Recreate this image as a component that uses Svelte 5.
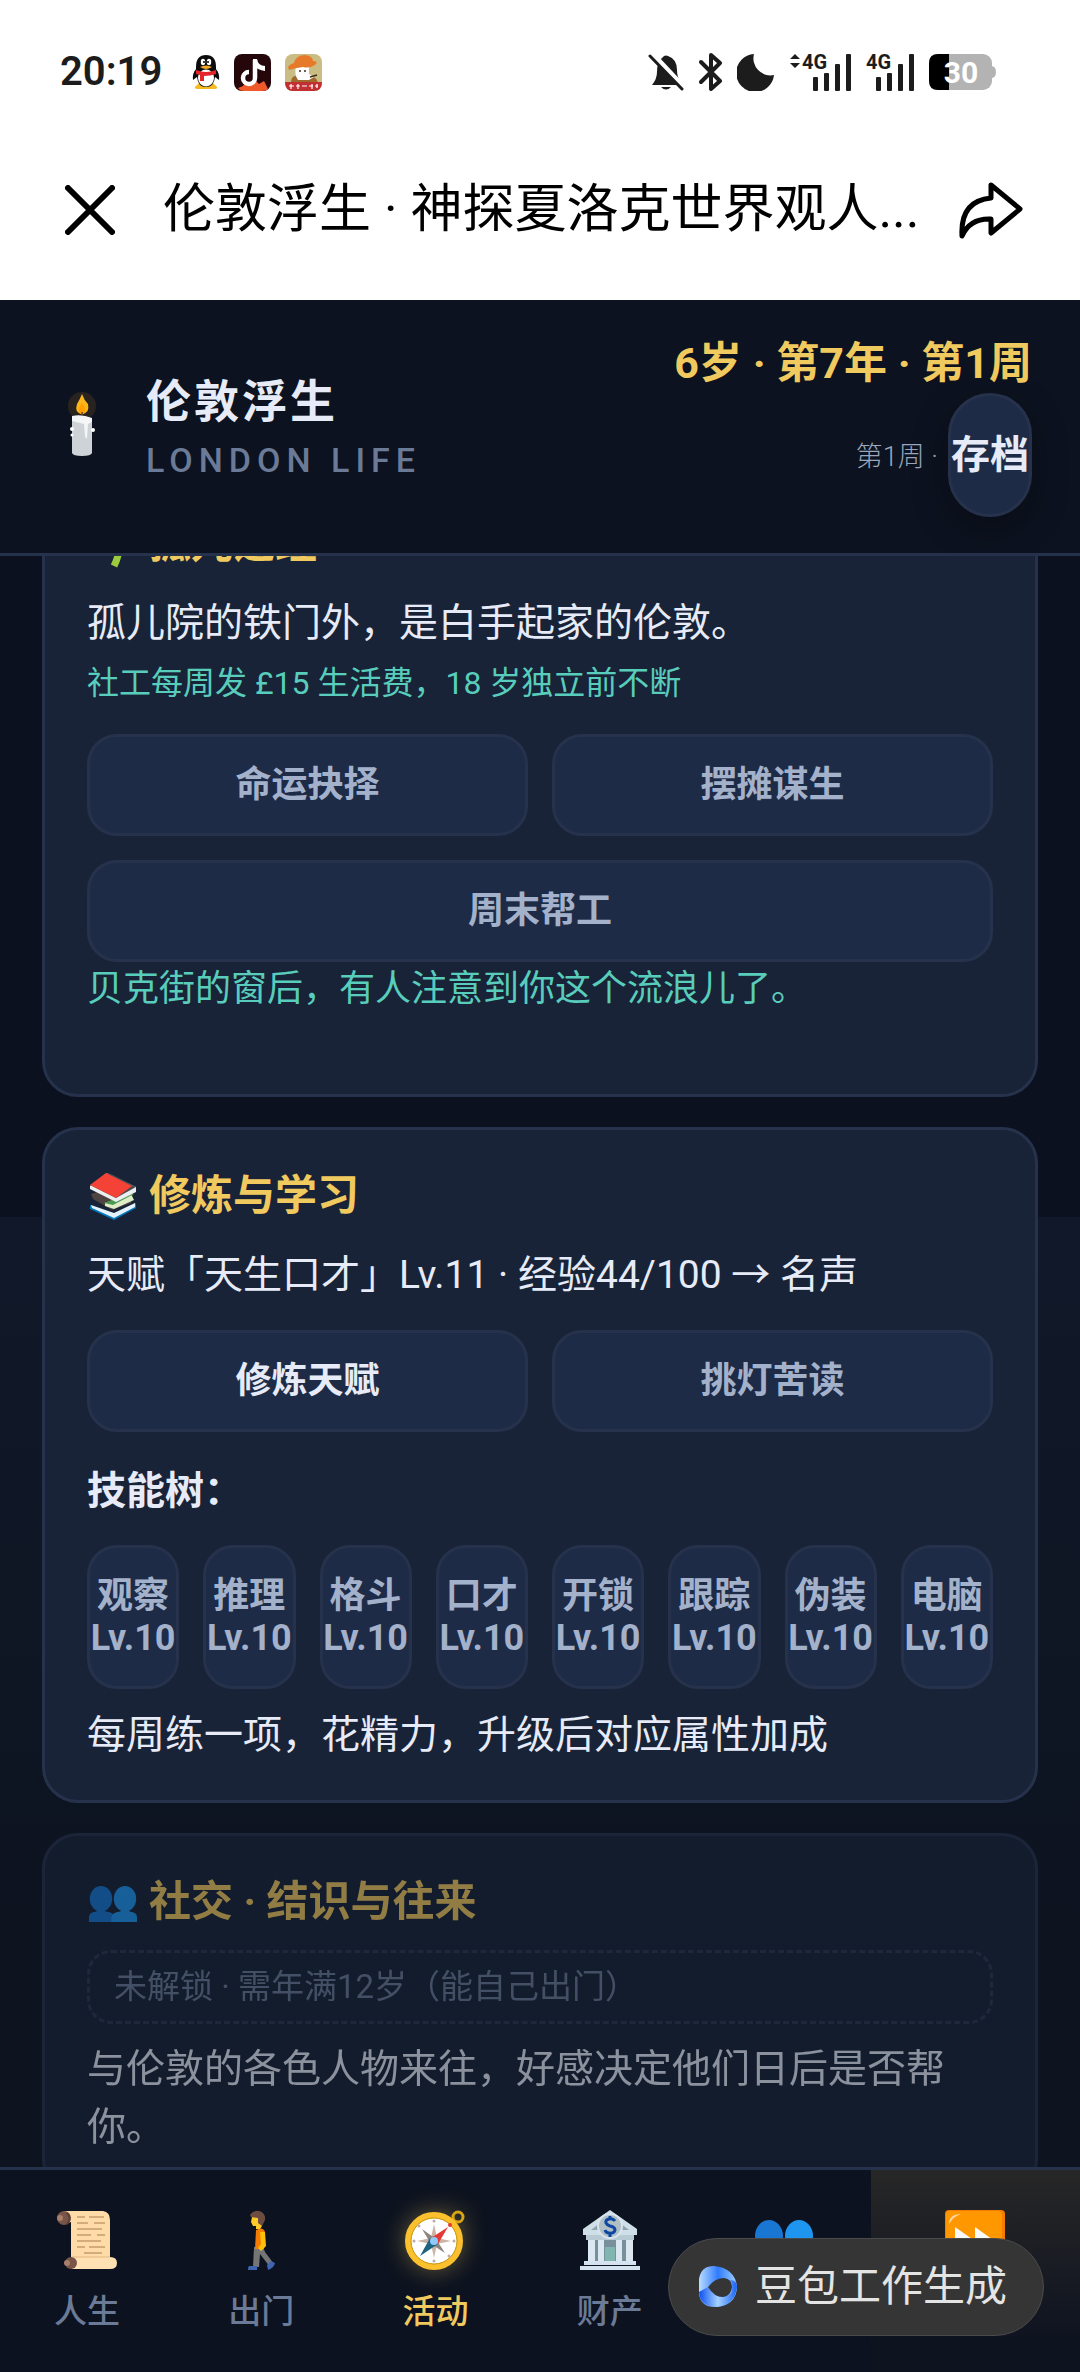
<script>
  import { onMount } from 'svelte';

  const SCROLL_START = 111;

  const skills = ['观察', '推理', '格斗', '口才', '开锁', '跟踪', '伪装', '电脑'];

  const tabs = [
    { id: 'life', label: '人生' },
    { id: 'out', label: '出门' },
    { id: 'act', label: '活动' },
    { id: 'money', label: '财产' },
    { id: 'people', name: '人脉' },
    { id: 'next', name: '下周' }
  ];

  let active = $state('act');
  let list;

  onMount(() => {
    list.scrollTop = SCROLL_START;
  });
</script>

{#snippet people()}
  <svg class="emoji" viewBox="0 0 60 60" aria-hidden="true">
    <ellipse cx="15" cy="26" rx="14" ry="16" fill="#1976d2" />
    <ellipse cx="45" cy="26" rx="14" ry="16" fill="#1e96f0" />
    <path d="M0 55v-6q0-6 9-7l2-3h8l2 3q11 1 11 8v5z" fill="#1976d2" />
    <path d="M28 55v-5q0-7 11-8l2-3h8l2 3q9 1 9 7v6z" fill="#1e96f0" />
  </svg>
{/snippet}

{#snippet tabIcon(id)}
  {#if id === 'life'}
    <svg class="emoji" viewBox="0 0 60 60" aria-hidden="true">
      <path d="M7 1h39q7 1 7 9v37H14V12L7 14z" fill="#ffdca7" />
      <circle cx="7" cy="8" r="7" fill="#795548" />
      <circle cx="3" cy="8" r="3" fill="#a97f6c" />
      <path d="M10 3q5 5 0 11" fill="none" stroke="#5d4037" stroke-width="2" />
      <path d="M15 47h38q7 0 7 6t-7 6H15z" fill="#ffe0b2" />
      <path d="M15 47h38" stroke="#e0b77e" stroke-width="1" />
      <circle cx="14" cy="53" r="6" fill="#795548" />
      <circle cx="10" cy="53" r="3" fill="#a97f6c" />
      <g fill="none" stroke="#c69c6d" stroke-width="1.4">
        <path d="M20 7h8m4 0h15M20 13h11m6 0h11M20 19h25M20 25h14m6 0h8M20 31h24M20 37h8m4 0h16M27 43h18" />
      </g>
    </svg>
  {:else if id === 'out'}
    <svg class="emoji" viewBox="0 0 60 60" aria-hidden="true">
      <path d="M23 37h9l2 5 9 12-4 3-10-13-1 13h-6z" fill="#757575" />
      <path d="M25 20q7-4 9 2l-1 17h-9z" fill="#f57c00" />
      <path d="M29 22h5l1 14-5 5-3-3 3-4z" fill="#ffc107" />
      <path d="M21 7h10v9l-2 3h-4v-3h-3l-2-4z" fill="#ffca28" />
      <path d="M19 5q3-5 9-4 7 2 6 9l-3 6-4-3V8l-7-1z" fill="#6d4c41" />
      <path d="M18 56h8v4h-9q0-3 1-4zM36 55l4-4 4 2q-1 5-7 7z" fill="#3f65b0" />
    </svg>
  {:else if id === 'act'}
    <svg class="emoji glow" viewBox="0 0 60 60" aria-hidden="true">
      <circle cx="53" cy="7" r="5" fill="none" stroke="#d9a514" stroke-width="3" />
      <circle cx="29" cy="31" r="26" fill="#fff" stroke="#fbc02d" stroke-width="6" />
      <circle cx="29" cy="31" r="23" fill="none" stroke="#c79100" stroke-width="1" />
      <path d="M29 14l3 14 14 3-14 3-3 14-3-14-14-3 14-3z" fill="#cbb3a6" />
      <path d="M17 19l14 10 9 14-14-9z" fill="#8d8580" />
      <path d="M43 17L33 34l-7-6z" fill="#e53935" />
      <path d="M15 46l10-18 8 6z" fill="#1c6480" />
      <circle cx="29" cy="31" r="4" fill="#90caf9" />
      <g fill="#bcaaa4">
        <circle cx="29" cy="11" r="1.5" /><circle cx="29" cy="51" r="1.5" />
        <circle cx="9" cy="31" r="1.5" /><circle cx="49" cy="31" r="1.5" />
        <circle cx="14" cy="16" r="1.5" /><circle cx="44" cy="46" r="1.5" />
      </g>
      <circle cx="45" cy="15" r="2" fill="#e53935" />
    </svg>
  {:else if id === 'money'}
    <svg class="emoji" viewBox="0 0 60 60" aria-hidden="true">
      <path d="M9 28h43v25H9z" fill="#78909c" />
      <path d="M25 37h10v16H25z" fill="#80b5b0" />
      <path d="M30 0L57 19v6H3v-6z" fill="#cfdfe8" />
      <path d="M30 5L49 20H11z" fill="#90a4ae" />
      <path d="M6 25h48v5H6z" fill="#b8cbd5" />
      <path d="M8 30h7v22H8zM18 30h6v22h-6zM36 30h6v22h-6zM46 30h7v22h-7z" fill="#dbe8f2" />
      <path d="M4 51h52v4H4zM0 56h60v4H0z" fill="#d5e3f0" />
      <circle cx="30" cy="16" r="12" fill="#b0bec5" stroke="#d8e5ee" stroke-width="2" />
      <path d="M35 11q-2-3-6-2-4 1-3 4 1 2 4 3 5 1 5 4-1 4-6 3-3 0-4-3M30 6v3m0 14v4" fill="none" stroke="#0d47a1" stroke-width="3" />
    </svg>
  {:else if id === 'people'}
    {@render people()}
  {:else}
    <svg class="emoji" viewBox="0 0 60 60" aria-hidden="true">
      <rect width="60" height="60" rx="4" fill="#f57c00" />
      <rect x="1" y="1" width="56" height="56" rx="4" fill="#ff9800" />
      <path d="M4 14q0-10 12-10-7 2-12 10z" fill="#ffd699" />
      <path d="M10 17l20 14V17l21 15-21 14V33L10 46z" fill="#fafafa" />
    </svg>
  {/if}
{/snippet}

{#snippet bars()}
  <g fill="#1c1c1c">
    <rect x="0" y="23" width="5" height="14" rx="1" />
    <rect x="11" y="19" width="5" height="18" rx="1" />
    <rect x="22" y="10" width="5" height="27" rx="1" />
    <rect x="33" y="0" width="5" height="37" rx="1" />
  </g>
{/snippet}

<div class="screen">
  <div class="status">
    <div class="status-side">
      <span class="clock">20:19</span>
      <svg width="28" height="36" viewBox="0 0 28 36" aria-hidden="true">
        <path d="M3 33q-1 2 4 2h14q5 0 4-2l-4-4H7z" fill="#f5b921" />
        <path d="M5 14Q0 19 1 26l4-3q1 10 9 10t9-10l4 3q1-7-4-12z" fill="#0c0c0c" />
        <path d="M14 1q10 0 10 12v3H4v-3Q4 1 14 1z" fill="#0c0c0c" />
        <ellipse cx="14" cy="24" rx="8" ry="8.500" fill="#fff" />
        <ellipse cx="11" cy="8" rx="2.200" ry="3.200" fill="#fff" />
        <ellipse cx="17" cy="8" rx="2.200" ry="3.200" fill="#fff" />
        <circle cx="12" cy="8" r="1" /><circle cx="16" cy="8" r="1" />
        <path d="M8 13q6-3 12 0-6 4-12 0z" fill="#f5a623" />
        <path d="M4 16q10 4 20 0v4q-6 2-12 2v5H8v-6l-4-1z" fill="#e3242b" />
      </svg>
      <svg width="37" height="37" viewBox="0 0 37 37" aria-hidden="true">
        <rect width="37" height="37" rx="8" fill="#25070b" />
        <path d="M4 34l5-2 3-5 4 3 5-4 4 4 5-3 4 8q-2 2-6 2H10q-4 0-6-3z" fill="#f0592a" />
        <path d="M21 6v18a6 6 0 1 1-6-6" fill="none" stroke="#fff" stroke-width="4.500" />
        <path d="M19 5h4q1 7 8 7v5q-8-1-12-6z" fill="#fff" />
      </svg>
      <svg width="37" height="37" viewBox="0 0 37 37" aria-hidden="true">
        <rect width="37" height="37" rx="8" fill="#c9bd84" />
        <path d="M6 29q0-8 6-7h13q7 1 8 7z" fill="#a06a2c" />
        <path d="M11 12h13v8l5 3-5 3H13q-4-5-2-14z" fill="#fff" />
        <path d="M3 13q2-3 6-4 2-8 11-8 8 1 8 6 5 0 3 3-6 5-13 3-8 1-14 3z" fill="#e77a2a" />
        <path d="M14 17h2m3 0h2m4 6l7-2" stroke="#3c2a17" stroke-width="1.500" />
        <path d="M0 28h37q0 9-8 9H8q-8 0-8-9z" fill="#c22f33" />
        <path d="M4 32h5m2 0h4m2 0h5m2 0h4m2 0h3M6 30v5m7-5v5m14-5v5m5-5v4" stroke="#fff" stroke-width="1.200" />
      </svg>
    </div>
    <div class="status-side">
      <svg width="37" height="37" viewBox="0 0 37 37" aria-hidden="true">
        <path d="M12 6q3-3 4-4 2-1 4 0 9 3 9 14 0 7 3 11l2 4H4q5-6 5-13 0-8 3-12z" fill="#1c1c1c" />
        <path d="M13 33h10q-5 5-10 0z" fill="#1c1c1c" />
        <path d="M4 0l32 34" stroke="#fff" stroke-width="6" />
        <path d="M2 2l32 33" stroke="#1c1c1c" stroke-width="3" stroke-linecap="round" />
      </svg>
      <svg width="24" height="38" viewBox="0 0 24 38" aria-hidden="true">
        <path d="M2 9l19 19-9 8V2l9 8L2 29" fill="none" stroke="#1c1c1c" stroke-width="4" stroke-linejoin="round" stroke-linecap="round" />
      </svg>
      <svg width="38" height="38" viewBox="0 0 38 38" aria-hidden="true">
        <path d="M17 1A19 19 0 1 0 37 22 17 17 0 0 1 17 1z" fill="#1c1c1c" />
      </svg>
      <svg class="cell" width="63" height="38" viewBox="0 0 63 38" aria-hidden="true">
        <path d="M1 6l5-5 5 5zM1 10h10l-5 5z" fill="#1c1c1c" />
        <text x="13" y="16" class="net">4G</text>
        <g transform="translate(24 1)">{@render bars()}</g>
      </svg>
      <svg class="cell" width="49" height="38" viewBox="0 0 49 38" aria-hidden="true">
        <text x="0" y="16" class="net">4G</text>
        <g transform="translate(10 1)">{@render bars()}</g>
      </svg>
      <svg width="67" height="36" viewBox="0 0 67 36" role="img" aria-label="30%">
        <path d="M62 12q5 0 5 6t-5 6z" fill="#b3b3b3" />
        <rect width="63" height="36" rx="9" fill="#b3b3b3" />
        <path d="M20 0H9Q0 0 0 9v18q0 9 9 9h11z" fill="#000" />
        <text x="32" y="29" text-anchor="middle" class="charge">30</text>
      </svg>
    </div>
  </div>

  <div class="titlebar">
    <button class="icon-btn" aria-label="关闭">
      <svg width="50" height="50" viewBox="0 0 50 50">
        <path d="M3 3l44 44M47 3L3 47" stroke="#000" stroke-width="6" stroke-linecap="round" />
      </svg>
    </button>
    <h1>伦敦浮生 · 神探夏洛克世界观人...</h1>
    <button class="icon-btn" aria-label="分享">
      <svg width="66" height="58" viewBox="0 0 66 58">
        <path d="M33 4l29 24-29 24V38Q12 37 4 55 2 20 33 17z" fill="none" stroke="#000" stroke-width="5" stroke-linejoin="round" />
      </svg>
    </button>
  </div>

  <header>
    <svg class="candle" width="44" height="66" viewBox="0 0 44 66" aria-hidden="true">
      <circle cx="22" cy="14" r="14" fill="#f9a825" opacity=".12" />
      <path d="M22 2q-2 5-5 10-3 9 5 10 8-1 6-10-4-4-6-10z" fill="#fbb51c" />
      <path d="M22 11q-5 6-2 11h4q3-5-2-11z" fill="#ffa000" />
      <path d="M22 20v7" stroke="#5d4037" stroke-width="1.500" />
      <path d="M12 25q10-3 20 2v34q-1 3-10 3t-10-3z" fill="#cdd3d7" />
      <path d="M12 24q10-2 20 2v4l-4 2-1 14q-2 1-2-2l-1-12-12-3z" fill="#f3f5f6" />
      <circle cx="12" cy="37" r="2" fill="#fff" /><circle cx="12" cy="43" r="1.500" fill="#fff" /><circle cx="33" cy="38" r="2" fill="#fff" />
    </svg>
    <div class="brand">
      <h2>伦敦浮生</h2>
      <p>LONDON LIFE</p>
    </div>
    <div class="when">
      <strong>6岁 · 第7年 · 第1周</strong>
      <div class="save-row">
        <span>第1周 ·</span>
        <button class="save">存档</button>
      </div>
    </div>
  </header>

  <main bind:this={list}>
    <section class="card orphan">
      <h3>
        <svg class="mark" viewBox="0 0 48 48" aria-hidden="true">
          <path d="M24 22Q20 6 4 6q1 14 20 16zM24 22q4-14 20-14-2 14-20 14z" fill="#9ccc3c" />
          <path d="M30 18q2 14-5 28" fill="none" stroke="#9ccc3c" stroke-width="7" />
        </svg>
        孤儿之经
      </h3>
      <p>孤儿院的铁门外，是白手起家的伦敦。</p>
      <p class="small teal">社工每周发 £15 生活费，18 岁独立前不断</p>
      <div class="grid">
        <button class="btn">命运抉择</button>
        <button class="btn">摆摊谋生</button>
        <button class="btn wide">周末帮工</button>
      </div>
      <p class="note teal">贝克街的窗后，有人注意到你这个流浪儿了。</p>
    </section>

    <section class="card">
      <h3>
        <svg class="mark" viewBox="0 0 48 48" aria-hidden="true">
          <path d="M1 33l25 11 21-13v5L25 48 1 37z" fill="#0277bd" />
          <path d="M2 33l23 8 21-10v4L25 46 3 36z" fill="#e3f2fd" />
          <path d="M2 22l16-5 26 5-2 9-19 7L4 27z" fill="#4e4340" />
          <path d="M16 31l26-9 3 6-20 9-9-3z" fill="#dcedc8" />
          <path d="M15 31l26-10 4 1-21 11z" fill="#4c9a50" />
          <path d="M1 14L18 1l29 14v5L27 30 1 17z" fill="#eceff1" />
          <path d="M1 13L18 1l6 2 23 12-20 11z" fill="#4b4b4b" />
          <path d="M1 13L17 1l26 13-16 12z" fill="#f44336" />
        </svg>
        修炼与学习
      </h3>
      <p>天赋「天生口才」Lv.11 · 经验44/100 → 名声</p>
      <div class="grid">
        <button class="btn ready">修炼天赋</button>
        <button class="btn">挑灯苦读</button>
      </div>
      <h4>技能树：</h4>
      <div class="skills">
        {#each skills as skill}
          <button class="btn skill"><span>{skill}</span><span>Lv.10</span></button>
        {/each}
      </div>
      <p>每周练一项，花精力，升级后对应属性加成</p>
    </section>

    <section class="card locked">
      <h3>
        <span class="mark">{@render people()}</span>
        社交 · 结识与往来
      </h3>
      <div class="lock">未解锁 · 需年满12岁（能自己出门）</div>
      <p>与伦敦的各色人物来往，好感决定他们日后是否帮你。</p>
    </section>
  </main>

  <nav>
    {#each tabs as tab}
      <button
        class="tab"
        class:active={active === tab.id}
        class:next={tab.id === 'next'}
        aria-label={tab.name}
        onclick={() => (active = tab.id)}
      >
        {@render tabIcon(tab.id)}
        {#if tab.label}<span>{tab.label}</span>{/if}
      </button>
    {/each}
    <div class="badge">
      <svg width="38" height="42" viewBox="0 0 38 42" aria-hidden="true">
        <defs>
          <linearGradient id="ringTop" x1="0" x2="1">
            <stop offset="0" stop-color="#b9dcff" />
            <stop offset=".5" stop-color="#2f7bff" />
            <stop offset="1" stop-color="#9fd0ff" />
          </linearGradient>
          <linearGradient id="ringLow" x1="0" x2="1">
            <stop offset="0" stop-color="#0b4ff0" />
            <stop offset=".5" stop-color="#a5d3ff" />
            <stop offset="1" stop-color="#1a62f5" />
          </linearGradient>
        </defs>
        <path d="M0 25V13Q2 0 15 0q21 2 23 21-1 19-22 20Q2 41 0 28z" fill="url(#ringTop)" />
        <path d="M0 26l9-5q6 10 17 10 8-1 7-11 0-4-2-6 7 0 7 7-2 18-20 20Q1 41 0 26z" fill="url(#ringLow)" />
        <path d="M9 21q7-9 16-9 8 1 8 9-1 9-9 10-9 0-15-10z" fill="#353535" />
      </svg>
      <span>豆包工作生成</span>
    </div>
  </nav>
</div>

<style>
  :global(body) {
    background: #0b111e;
  }

  .screen {
    display: flex;
    flex-direction: column;
    height: 100vh;
    font-family: Roboto, "Noto Sans CJK SC", sans-serif;
    font-size: 39px;
    color: #e6ebf7;
  }

  h1, h2, h3, h4, p {
    margin: 0;
  }

  button {
    font-family: inherit;
    cursor: pointer;
  }

  svg {
    flex: none;
  }

  .status, .titlebar {
    display: flex;
    align-items: center;
    justify-content: space-between;
    background: #fff;
    color: #000;
  }

  .status {
    height: 144px;
    padding: 0 84px 0 60px;
  }

  .status-side {
    display: flex;
    align-items: center;
    gap: 14px;
  }

  .clock {
    margin-right: 16px;
    font-size: 40px;
    font-weight: 600;
    line-height: 48px;
    color: #1c1c1c;
  }

  .cell {
    overflow: visible;
  }

  .net {
    font-size: 20px;
    font-weight: 700;
    fill: #1c1c1c;
  }

  .charge {
    font-size: 30px;
    font-weight: 700;
    fill: #fff;
  }

  .titlebar {
    gap: 48px;
    height: 156px;
    padding: 0 56px 24px 65px;
    box-sizing: border-box;
  }

  .titlebar h1 {
    flex: 1;
    min-width: 0;
    font-size: 52px;
    font-weight: 400;
    line-height: 72px;
    white-space: nowrap;
  }

  .icon-btn {
    display: flex;
    padding: 0;
    border: 0;
    background: none;
  }

  header {
    display: flex;
    align-items: center;
    box-sizing: border-box;
    height: 256px;
    padding: 0 48px 4px 60px;
    border-bottom: 3px solid #26324b;
    background: #0c121f;
  }

  .brand {
    flex: 1;
    margin: 6px 0 0 42px;
  }

  .brand h2 {
    font-size: 45px;
    line-height: 64px;
    letter-spacing: 3px;
  }

  .brand p {
    font-size: 34px;
    font-weight: 500;
    line-height: 50px;
    letter-spacing: 6px;
    color: #6b7a96;
  }

  .when {
    display: flex;
    flex-direction: column;
    align-items: flex-end;
  }

  .when strong {
    font-size: 43px;
    line-height: 60px;
    color: #f0c95f;
  }

  .save-row {
    display: flex;
    align-items: center;
    gap: 10px;
    font-size: 27px;
    font-weight: 300;
    color: #9aa6bc;
  }

  .save {
    height: 124px;
    padding: 0;
    border: 3px solid #26324b;
    border-radius: 42px;
    background: #1e2b46;
    box-shadow: 0 12px 36px rgba(0, 0, 0, .3);
    font-size: 39px;
    font-weight: 700;
    line-height: 48px;
    color: #e6ebf7;
  }

  main {
    flex: 1;
    display: flex;
    flex-direction: column;
    gap: 30px;
    min-height: 0;
    overflow-y: auto;
    padding: 30px 42px;
    scrollbar-width: none;
    background: linear-gradient(#0b111e 41%, #111829 41%, #0d1420 85%);
  }

  .card {
    flex: none;
    padding: 36px 42px;
    border: 3px solid #26324b;
    border-radius: 36px;
    background: #192337;
  }

  .orphan {
    padding-bottom: 78px;
  }

  h3 {
    display: flex;
    align-items: center;
    gap: 12px;
    margin-bottom: 20px;
    padding-left: 2px;
    font-size: 42px;
    line-height: 60px;
    color: #f0c95f;
  }

  .mark {
    width: 48px;
    height: 48px;
  }

  .mark .emoji {
    display: block;
    width: 48px;
    height: 48px;
  }

  .card p {
    line-height: 58px;
  }

  .card .small {
    margin-top: 6px;
    font-size: 32px;
    line-height: 50px;
  }

  .card .note {
    font-size: 36px;
    line-height: 54px;
  }

  .teal {
    color: #58cdbb;
  }

  .grid {
    display: grid;
    grid-template-columns: 1fr 1fr;
    gap: 24px;
    margin-top: 26px;
  }

  .btn {
    height: 102px;
    padding: 0;
    border: 3px solid #26324b;
    border-radius: 30px;
    background: #1e2b46;
    font-size: 36px;
    font-weight: 700;
    line-height: 42px;
    color: #a3b1cb;
  }

  .wide {
    grid-column: span 2;
  }

  .ready {
    color: #e6ebf7;
  }

  h4 {
    margin-top: 30px;
    font-size: 39px;
    line-height: 58px;
  }

  .skills {
    display: grid;
    grid-template-columns: repeat(8, minmax(0, 1fr));
    gap: 24px;
    margin: 25px 0 17px;
  }

  .skill {
    display: flex;
    flex-direction: column;
    align-items: center;
    justify-content: center;
    height: 144px;
  }

  .locked {
    opacity: .58;
  }

  .lock {
    margin: -2px 0 16px;
    padding: 8px 24px;
    border: 3px dashed #2b3750;
    border-radius: 24px;
    font-size: 33px;
    line-height: 52px;
    color: #6b7a96;
  }

  nav {
    position: relative;
    display: flex;
    height: 202px;
    border-top: 3px solid #26324b;
    background: #0c121f;
  }

  .tab {
    flex: 1 1 0;
    display: flex;
    flex-direction: column;
    align-items: center;
    gap: 18px;
    padding: 40px 0 0;
    border: 0;
    background: none;
    font-size: 33px;
    font-weight: 500;
    line-height: 48px;
    color: #6b7a96;
  }

  .tab.active {
    color: #f0c95f;
  }

  .tab.next {
    flex-grow: 1.2;
    background: linear-gradient(#272727, #0e1320 85%);
  }

  .emoji {
    width: 60px;
    height: 60px;
  }

  .glow {
    overflow: visible;
    filter: drop-shadow(0 0 12px rgba(240, 201, 95, .4));
  }

  .badge {
    position: absolute;
    right: 36px;
    bottom: 36px;
    display: flex;
    align-items: center;
    gap: 18px;
    height: 96px;
    padding: 0 36px 0 30px;
    border: 1px solid #4a4a4a;
    border-radius: 50px;
    background: #353535;
    font-size: 42px;
    line-height: 60px;
    color: #e4e4e4;
  }
</style>
